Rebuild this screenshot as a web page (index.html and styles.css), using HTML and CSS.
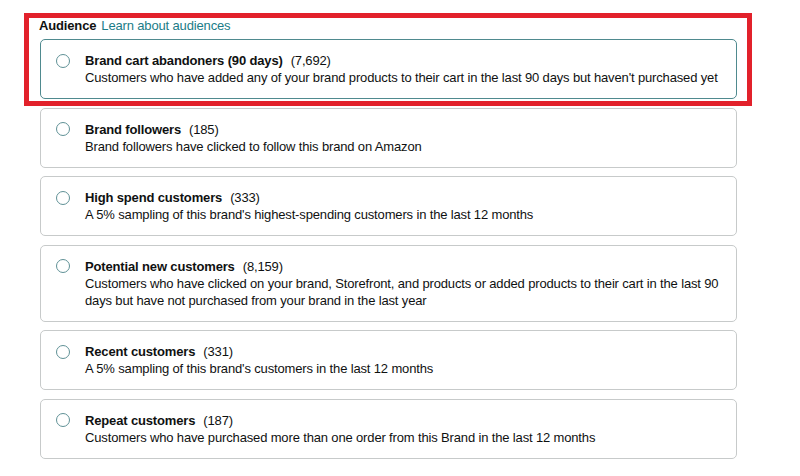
FILE: index.html
```html
<!DOCTYPE html>
<html lang="en">
<head>
<meta charset="utf-8">
<title>Audience</title>
<link rel="stylesheet" href="styles.css">
</head>
<body>
<div class="panel">
  <div class="header"><span class="label">Audience</span><a class="link" href="#">Learn about audiences</a></div>
  <div class="list">
    <label class="card selected">
      <span class="radio"></span>
      <span class="body">
        <span class="title"><b>Brand cart abandoners (90 days)</b><span class="count">(7,692)</span></span>
        <span class="desc">Customers who have added any of your brand products to their cart in the last 90 days but haven't purchased yet</span>
      </span>
    </label>
    <label class="card">
      <span class="radio"></span>
      <span class="body">
        <span class="title"><b>Brand followers</b><span class="count">(185)</span></span>
        <span class="desc">Brand followers have clicked to follow this brand on Amazon</span>
      </span>
    </label>
    <label class="card">
      <span class="radio"></span>
      <span class="body">
        <span class="title"><b>High spend customers</b><span class="count">(333)</span></span>
        <span class="desc">A 5% sampling of this brand's highest-spending customers in the last 12 months</span>
      </span>
    </label>
    <label class="card">
      <span class="radio"></span>
      <span class="body">
        <span class="title"><b>Potential new customers</b><span class="count">(8,159)</span></span>
        <span class="desc">Customers who have clicked on your brand, Storefront, and products or added products to their cart in the last 90 days but have not purchased from your brand in the last year</span>
      </span>
    </label>
    <label class="card">
      <span class="radio"></span>
      <span class="body">
        <span class="title"><b>Recent customers</b><span class="count">(331)</span></span>
        <span class="desc">A 5% sampling of this brand's customers in the last 12 months</span>
      </span>
    </label>
    <label class="card">
      <span class="radio"></span>
      <span class="body">
        <span class="title"><b>Repeat customers</b><span class="count">(187)</span></span>
        <span class="desc">Customers who have purchased more than one order from this Brand in the last 12 months</span>
      </span>
    </label>
  </div>
  <div class="highlight"></div>
</div>
</body>
</html>
```
FILE: styles.css
```css
html, body {
  margin: 0;
  padding: 0;
  background: #ffffff;
}
body {
  font-family: "Liberation Sans", Arial, sans-serif;
  font-size: 13px;
  line-height: 17px;
  letter-spacing: -0.15px;
  color: #0f1111;
}
.panel {
  position: relative;
  width: 698px;
  padding: 17px 0 0 39px;
}
.header {
  display: flex;
  gap: 5px;
  margin-bottom: 5px;
}
.label {
  font-weight: bold;
}
.link {
  color: #1b7c87;
  text-decoration: none;
}
.list {
  display: flex;
  flex-direction: column;
  gap: 8.5px;
  margin-left: 1px;
}
.card {
  display: flex;
  align-items: flex-start;
  gap: 15px;
  border: 1px solid #c7caca;
  border-radius: 5px;
  padding: 12px 16px 12px 15px;
}
.card.selected {
  border-color: #4f8a8f;
}
.radio {
  flex: none;
  width: 12px;
  height: 12px;
  margin-top: 1.5px;
  border: 1px solid #5f9196;
  border-radius: 50%;
  background: #fff;
}
.body {
  display: flex;
  flex-direction: column;
}
.title b {
  font-weight: bold;
}
.count {
  margin-left: 8px;
}
.highlight {
  position: absolute;
  left: 24px;
  top: 13px;
  width: 718px;
  height: 83px;
  border: 5px solid #e2212b;
  pointer-events: none;
}
```
